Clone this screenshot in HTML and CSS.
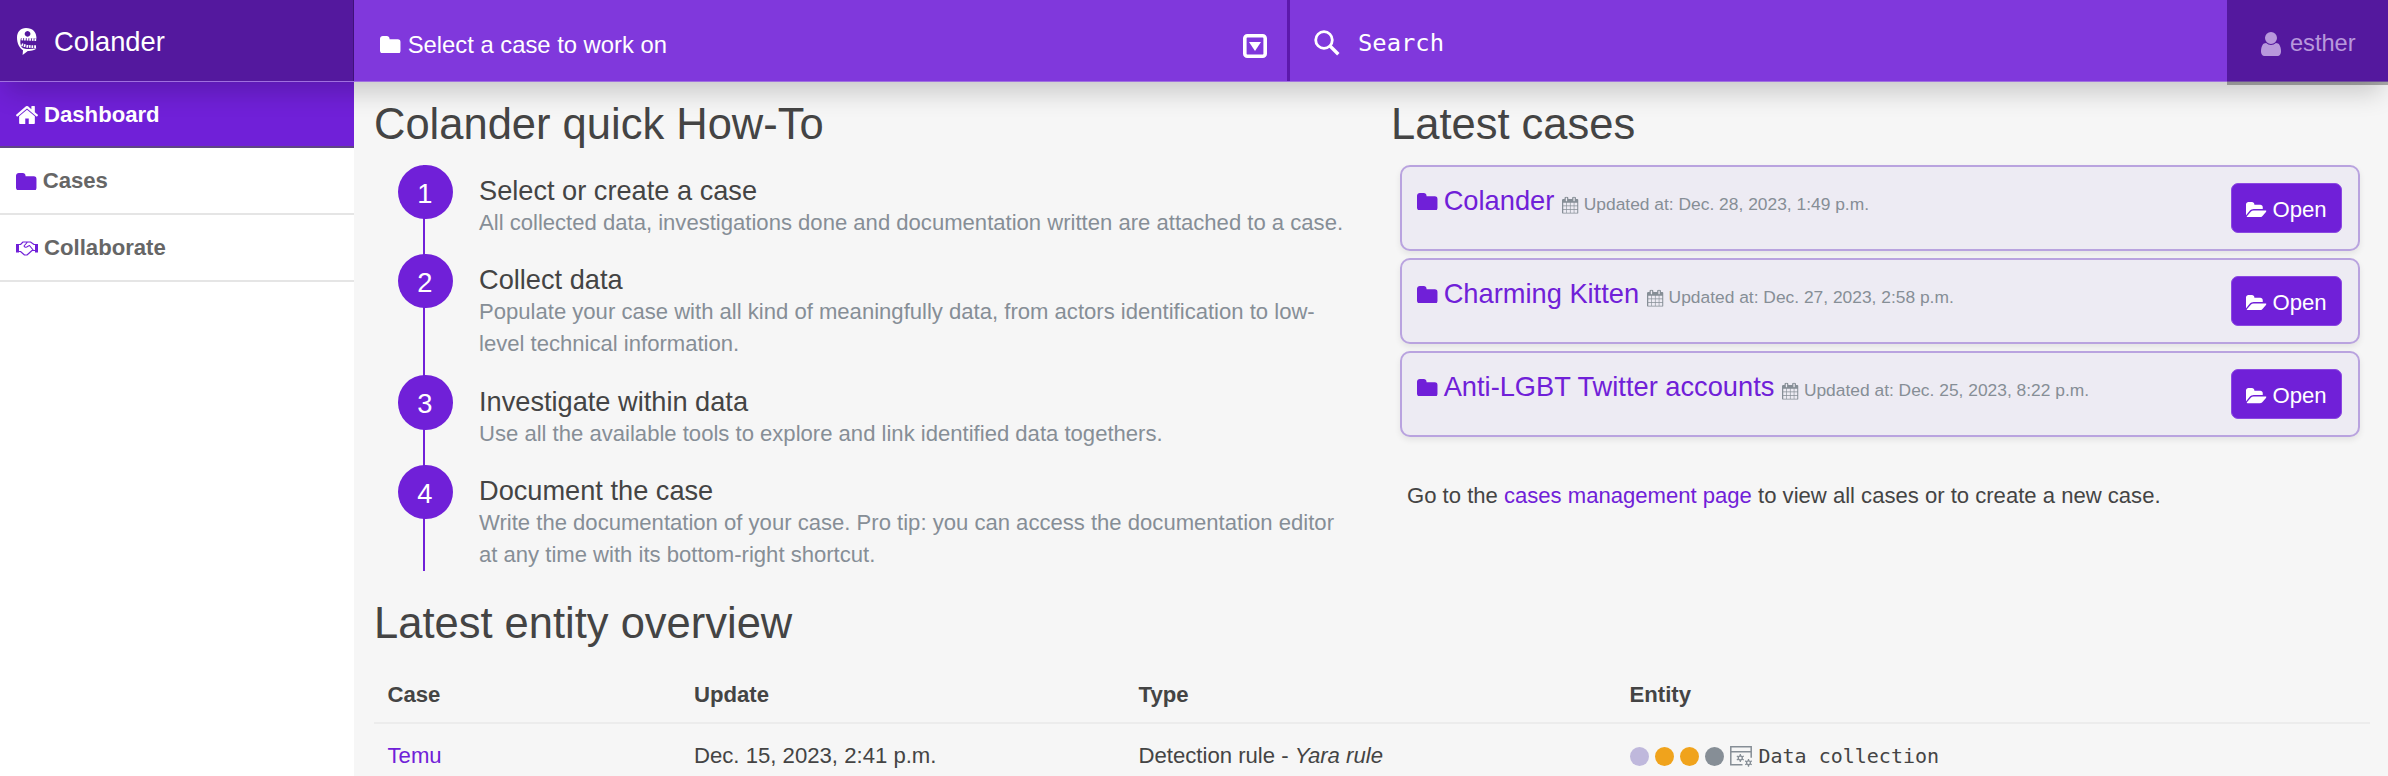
FILE: index.html
```html
<!DOCTYPE html>
<html lang="en">
<head>
<meta charset="utf-8">
<title>Colander</title>
<link rel="stylesheet" href="styles.css">
</head>
<body>
<svg class="sprite" aria-hidden="true">
  <symbol id="folder" viewBox="64 128 1664 1408" preserveAspectRatio="none"><path d="M1728 608v704q0 92-66 158t-158 66h-1216q-92 0-158-66t-66-158v-960q0-92 66-158t158-66h320q92 0 158 66t66 158v32h672q92 0 158 66t66 158z"/></symbol>
  <symbol id="folder-open" viewBox="0 128 1879 1408"><path d="M1879 952q0 31-31 66l-336 396q-43 51-120.5 86.5t-143.5 35.5h-1088q-34 0-60.5-13t-26.5-43q0-31 31-66l336-396q43-51 120.5-86.5t143.5-35.5h1088q34 0 60.5 13t26.5 43zm-343-344v160h-832q-94 0-197 47.5t-164 119.5l-337 396-5 6q0-4-.5-12.5t-.5-12.5v-960q0-92 66-158t158-66h320q92 0 158 66t66 158v32h544q92 0 158 66t66 158z"/></symbol>
  <symbol id="home" viewBox="89 253 1614 1283" preserveAspectRatio="none"><path d="M1472 992v480q0 26-19 45t-45 19h-384v-384h-256v384h-384q-26 0-45-19t-19-45v-480q0-1 .5-3t.5-3l575-474 575 474q1 2 1 6zm223-69l-62 74q-8 9-21 11h-3q-13 0-21-7l-692-577-692 577q-12 8-24 7-13-2-21-11l-62-74q-8-10-7-23.5t11-21.5l719-599q32-26 76-26t76 26l244 204v-195q0-14 9-23t23-9h192q14 0 23 9t9 23v408l219 182q10 8 11 21.5t-7 23.5z"/></symbol>
  <symbol id="user" viewBox="256 128 1280 1536" preserveAspectRatio="none"><path d="M1536 1399q0 109-62.5 187t-150.5 78h-854q-88 0-150.5-78t-62.5-187q0-85 8.5-160.5t31.5-152 58.5-131 94-89 134.5-34.5q131 128 313 128t313-128q76 0 134.5 34.5t94 89 58.5 131 31.5 152 8.5 160.5zm-256-887q0 159-112.5 271.5t-271.5 112.5-271.5-112.5-112.5-271.5 112.5-271.5 271.5-112.5 271.5 112.5 112.5 271.5z"/></symbol>
  <symbol id="calendar" viewBox="64 0 1664 1792" preserveAspectRatio="none"><path d="M192 1664h288v-288h-288v288zm352 0h320v-288h-320v288zm-352-352h288v-320h-288v320zm352 0h320v-320h-320v320zm-352-384h288v-288h-288v288zm736 736h320v-288h-320v288zm-384-736h320v-288h-320v288zm768 736h288v-288h-288v288zm-384-352h320v-320h-320v320zm-352-864v-288q0-13-9.5-22.5t-22.5-9.5h-64q-13 0-22.5 9.5t-9.5 22.5v288q0 13 9.5 22.5t22.5 9.5h64q13 0 22.5-9.5t9.5-22.5zm736 864h288v-320h-288v320zm-384-384h320v-288h-320v288zm384 0h288v-288h-288v288zm32-480v-288q0-13-9.5-22.5t-22.5-9.5h-64q-13 0-22.5 9.5t-9.5 22.5v288q0 13 9.5 22.5t22.5 9.5h64q13 0 22.5-9.5t9.5-22.5zm384-64v1280q0 52-38 90t-90 38h-1408q-52 0-90-38t-38-90v-1280q0-52 38-90t90-38h128v-96q0-66 47-113t113-47h64q66 0 113 47t47 113v96h384v-96q0-66 47-113t113-47h64q66 0 113 47t47 113v96h128q52 0 90 38t38 90z"/></symbol>
</svg>

<header class="topbar">
  <div class="brand">
    <svg class="brand-logo" viewBox="0 0 20 27"><path fill="#fff" fill-rule="evenodd" d="M9 0C15.500 0 19.500 4 19.500 10.500L4 10C2.800 13 3.200 17 5 19.500C8 21.500 14 21.300 19.500 20.300C18 22.300 14 23.200 10.800 23L5.600 27L6 22.300C2 19.500 0 15 0 9.500C0 4 3.500 0 9 0ZM10.500 2.900a2.900 2.900 0 1 0 .1 0Z"/><path d="M4.500 11L19.500 11.800" fill="none" stroke="#fff" stroke-width="2.600" stroke-dasharray="1.700 .9"/><path d="M4.600 16.500Q10 19 19.500 18.600" fill="none" stroke="#fff" stroke-width="2.800" stroke-dasharray="1.700 .9"/></svg>
    <span>Colander</span>
  </div>
  <div class="case-select">
    <svg class="ico-folder"><use href="#folder"/></svg>
    <span class="case-label">Select a case to work on</span>
    <svg class="ico-drop" viewBox="0 0 24 24"><rect x="1.800" y="1.800" width="20.400" height="20.400" rx="2.500" fill="none" stroke="#fff" stroke-width="3.600"/><path fill="#fff" d="M6 8h12l-6 9z"/></svg>
  </div>
  <div class="search">
    <svg class="ico-search" viewBox="0 0 26 26"><circle cx="10" cy="10" r="8.300" fill="none" stroke="#fff" stroke-width="2.800"/><path d="M15.800 15.800L24.300 24.300" stroke="#fff" stroke-width="3.400"/></svg>
    <span>Search</span>
  </div>
  <div class="account">
    <svg class="ico-user"><use href="#user"/></svg>
    <span>esther</span>
  </div>
</header>

<div class="body">
  <nav class="sidebar">
    <a class="nav-item active"><svg class="ico-home"><use href="#home"/></svg>Dashboard</a>
    <a class="nav-item"><svg class="ico-folder"><use href="#folder"/></svg>Cases</a>
    <a class="nav-item"><svg class="ico-hands" viewBox="0 0 22 15"><path fill="currentColor" d="M0 3h3v8.500H0zM19 3H22v8.500h-3z"/><path fill="none" stroke="currentColor" stroke-width="1.100" stroke-linejoin="round" d="M3 3.500h1.500L7 1h7.500L18 3.500h1M3 10.500h1.500l4 3.500h2.500l5-4.500h3M11.500 1L8 5q1.500 2.500 4 .2L13.500 4.500L17.500 9.500"/></svg>Collaborate</a>
  </nav>

  <main class="main">
    <div class="columns">
      <section class="howto">
        <h2 class="title">Colander quick How-To</h2>
        <ol class="steps">
          <li class="step"><span class="num">1</span><div><h3>Select or create a case</h3><p>All collected data, investigations done and documentation written are attached to a case.</p></div></li>
          <li class="step"><span class="num">2</span><div><h3>Collect data</h3><p>Populate your case with all kind of meaningfully data, from actors identification to low-<br>level technical information.</p></div></li>
          <li class="step"><span class="num">3</span><div><h3>Investigate within data</h3><p>Use all the available tools to explore and link identified data togethers.</p></div></li>
          <li class="step"><span class="num">4</span><div><h3>Document the case</h3><p>Write the documentation of your case. Pro tip: you can access the documentation editor<br>at any time with its bottom-right shortcut.</p></div></li>
        </ol>
      </section>

      <section class="latest">
        <h2 class="title">Latest cases</h2>
        <div class="cards">
          <article class="card">
            <div class="card-head"><svg class="ico-folder"><use href="#folder"/></svg><a class="card-name">Colander</a><svg class="ico-cal"><use href="#calendar"/></svg><small>Updated at: Dec. 28, 2023, 1:49 p.m.</small></div>
            <a class="btn"><svg class="ico-open"><use href="#folder-open"/></svg>Open</a>
          </article>
          <article class="card">
            <div class="card-head"><svg class="ico-folder"><use href="#folder"/></svg><a class="card-name">Charming Kitten</a><svg class="ico-cal"><use href="#calendar"/></svg><small>Updated at: Dec. 27, 2023, 2:58 p.m.</small></div>
            <a class="btn"><svg class="ico-open"><use href="#folder-open"/></svg>Open</a>
          </article>
          <article class="card">
            <div class="card-head"><svg class="ico-folder"><use href="#folder"/></svg><a class="card-name">Anti-LGBT Twitter accounts</a><svg class="ico-cal"><use href="#calendar"/></svg><small>Updated at: Dec. 25, 2023, 8:22 p.m.</small></div>
            <a class="btn"><svg class="ico-open"><use href="#folder-open"/></svg>Open</a>
          </article>
        </div>
        <p class="hint">Go to the <a>cases management page</a> to view all cases or to create a new case.</p>
      </section>
    </div>

    <h2 class="title">Latest entity overview</h2>
    <div class="table">
      <div class="row head"><span>Case</span><span>Update</span><span>Type</span><span>Entity</span></div>
      <div class="row">
        <a>Temu</a>
        <span>Dec. 15, 2023, 2:41 p.m.</span>
        <span>Detection rule - <em>Yara rule</em></span>
        <div class="entity">
          <i class="dot lilac"></i><i class="dot amber"></i><i class="dot amber"></i><i class="dot grey"></i>
          <svg class="ico-rule" viewBox="0 0 22 21"><path fill="none" stroke="currentColor" stroke-width="1.500" d="M12.500 18.800H.8V.8h20.400v11M.8 5.800h20.400"/><g fill="none" stroke="currentColor" stroke-width="1.300"><circle cx="10.300" cy="12" r="2"/><path d="M10.300 8v2M10.300 14v2M6.800 10l1.700 1M12 13l1.800 1M6.800 14l1.700-1M12 11l1.800-1"/><circle cx="18.500" cy="16.800" r="1.900"/><path d="M18.500 13v2M18.500 18.500v2.200M15.200 14.900l1.600 1M20.200 17.800l1.600 1M15.200 18.700l1.600-1M20.200 15.900l1.600-1"/></g></svg>
          <code>Data collection</code>
        </div>
      </div>
    </div>
  </main>
</div>
</body>
</html>
```

FILE: styles.css
```css
* { box-sizing: border-box; }
body {
  margin: 0;
  height: 776px;
  overflow: hidden;
  display: flex;
  flex-direction: column;
  background: #f6f6f6;
  color: #444;
  font-family: "Liberation Sans", Arial, sans-serif;
  font-size: 22.15px;
}
h2, h3, p, ol { margin: 0; padding: 0; font-weight: 400; }
a { color: #7020d8; }
svg { display: block; fill: currentColor; flex: none; }
.sprite { position: absolute; width: 0; height: 0; }
.ico-folder { width: 20.7px; height: 17.5px; }

.topbar {
  position: relative;
  z-index: 2;
  flex: none;
  display: flex;
  height: 82px;
  background: #8038dc;
  border-bottom: 1px solid #a070e0;
  color: #fff;
  box-shadow: 0 16px 26px -6px rgba(0, 0, 0, .19);
}
.brand {
  width: 354px;
  display: flex;
  align-items: center;
  gap: 17px;
  padding: 2px 0 0 17px;
  background: #54189e;
  border-right: 1px solid #3f127a;
  font-size: 27.3px;
  line-height: 79px;
}
.brand-logo { width: 20px; height: 27px; }
.case-select {
  width: 936px;
  display: flex;
  align-items: center;
  gap: 7px;
  padding: 8px 20px 0 26px;
  border-right: 3px solid #5c18ac;
  font-size: 23.8px;
}
.case-label { flex: 1; }
.ico-drop { width: 24px; height: 24px; margin-top: 2px; }
.search {
  flex: 1;
  display: flex;
  align-items: center;
  gap: 18px;
  padding: 4px 0 0 24px;
  font: 23.8px "DejaVu Sans Mono", monospace;
}
.ico-search { width: 26px; height: 26px; }
.account {
  width: 161px;
  display: flex;
  align-items: center;
  gap: 9px;
  padding: 6px 0 0 34px;
  background: #54189e;
  color: #b898dc;
  font-size: 23.6px;
  box-shadow: 0 4px 0 rgba(0, 0, 0, .3);
}
.ico-user { width: 20px; height: 24px; }

.body { flex: 1; display: flex; min-height: 0; }
.sidebar { width: 354px; flex: none; background: #fff; }
.nav-item {
  display: flex;
  align-items: center;
  gap: 6px;
  height: 66.8px;
  padding: 2px 0 0 16px;
  border-bottom: 2px solid #e5e5e5;
  background: #fff;
  color: #666;
  font-weight: 700;
}
.nav-item svg { color: #7020d8; }
.nav-item.active { height: 66px; padding-top: 1px; background: #7020d8; color: #fff; border-color: #5f4585; }
.nav-item.active svg { color: #fff; }
.ico-home { width: 22px; height: 18px; }
.ico-hands { width: 22px; height: 15px; }

.main { flex: 1; padding: 16px 18px 0 20px; }
.columns { display: flex; height: 498.500px; }
.howto { width: 1017px; }
.latest { flex: 1; }
.title { font-size: 43.5px; line-height: 52px; }
.steps { list-style: none; padding: 14.500px 0 0 24px; }
.step {
  display: grid;
  grid-template-columns: 54px 1fr;
  column-gap: 27px;
  min-height: 89.3px;
  background: linear-gradient(#7020d8, #7020d8) 25px 0 / 2px 100% no-repeat;
}
.step:nth-child(2) { min-height: 121.500px; }
.step:nth-child(4) { min-height: 105px; }
.num {
  width: 54.500px;
  height: 54.500px;
  border-radius: 50%;
  background: #7020d8;
  color: #fff;
  font-size: 27.3px;
  line-height: 57px;
  text-align: center;
  text-indent: -1px;
}
.step h3 { padding-top: 9.500px; font-size: 27.2px; line-height: 34px; }
.step p { color: #868e96; font-size: 22.08px; line-height: 31.8px; white-space: nowrap; margin-top: -1px; }

.cards { display: flex; flex-direction: column; gap: 7.2px; padding: 15px 10px 0 9px; }
.card {
  display: flex;
  justify-content: space-between;
  height: 86px;
  padding: 16px 16px 16px 15px;
  border: 2px solid #b9a3df;
  border-radius: 10px;
  background: #edebf3;
  box-shadow: 0 3px 6px rgba(0, 0, 0, .08);
}
.card-head { display: flex; align-items: baseline; height: 36px; padding-top: 1px; color: #868e96; }
.card-head .ico-folder { color: #7020d8; margin-right: 6px; }
.card-name { font-size: 27.25px; line-height: 34px; margin-right: 8px; }
.ico-cal { width: 16.500px; height: 17.5px; margin-right: 5px; transform: translateY(3.500px); }
.card small { font-size: 17.4px; }
.btn {
  display: flex;
  align-items: center;
  gap: 6px;
  width: 111px;
  height: 50px;
  padding: 3px 0 0 14px;
  border-radius: 7px;
  background: #7020d8;
  border: 1px solid #8b48e2;
  color: #fff;
}
.ico-open { width: 20.500px; height: 15.5px; }
.hint { padding: 46px 0 0 16px; font-size: 22.08px; }

.table { padding-top: 17.500px; }
.row {
  display: grid;
  grid-template-columns: 306.500px 444.500px 491px 1fr;
  align-items: center;
  height: 60px;
  padding: 4px 0 0 13.500px;
}
.row.head { border-bottom: 2px solid #ececec; font-weight: 700; height: 58px; padding-top: 1px; }
.entity { display: flex; align-items: center; gap: 6.200px; color: #868e96; }
.dot { width: 19px; height: 19px; border-radius: 50%; }
.lilac { background: #bfb8dc; }
.amber { background: #f0a31c; }
.grey { background: #868e96; }
.ico-rule { width: 22px; height: 21px; }
.entity code { font: 20px "DejaVu Sans Mono", monospace; color: #444; }
```
